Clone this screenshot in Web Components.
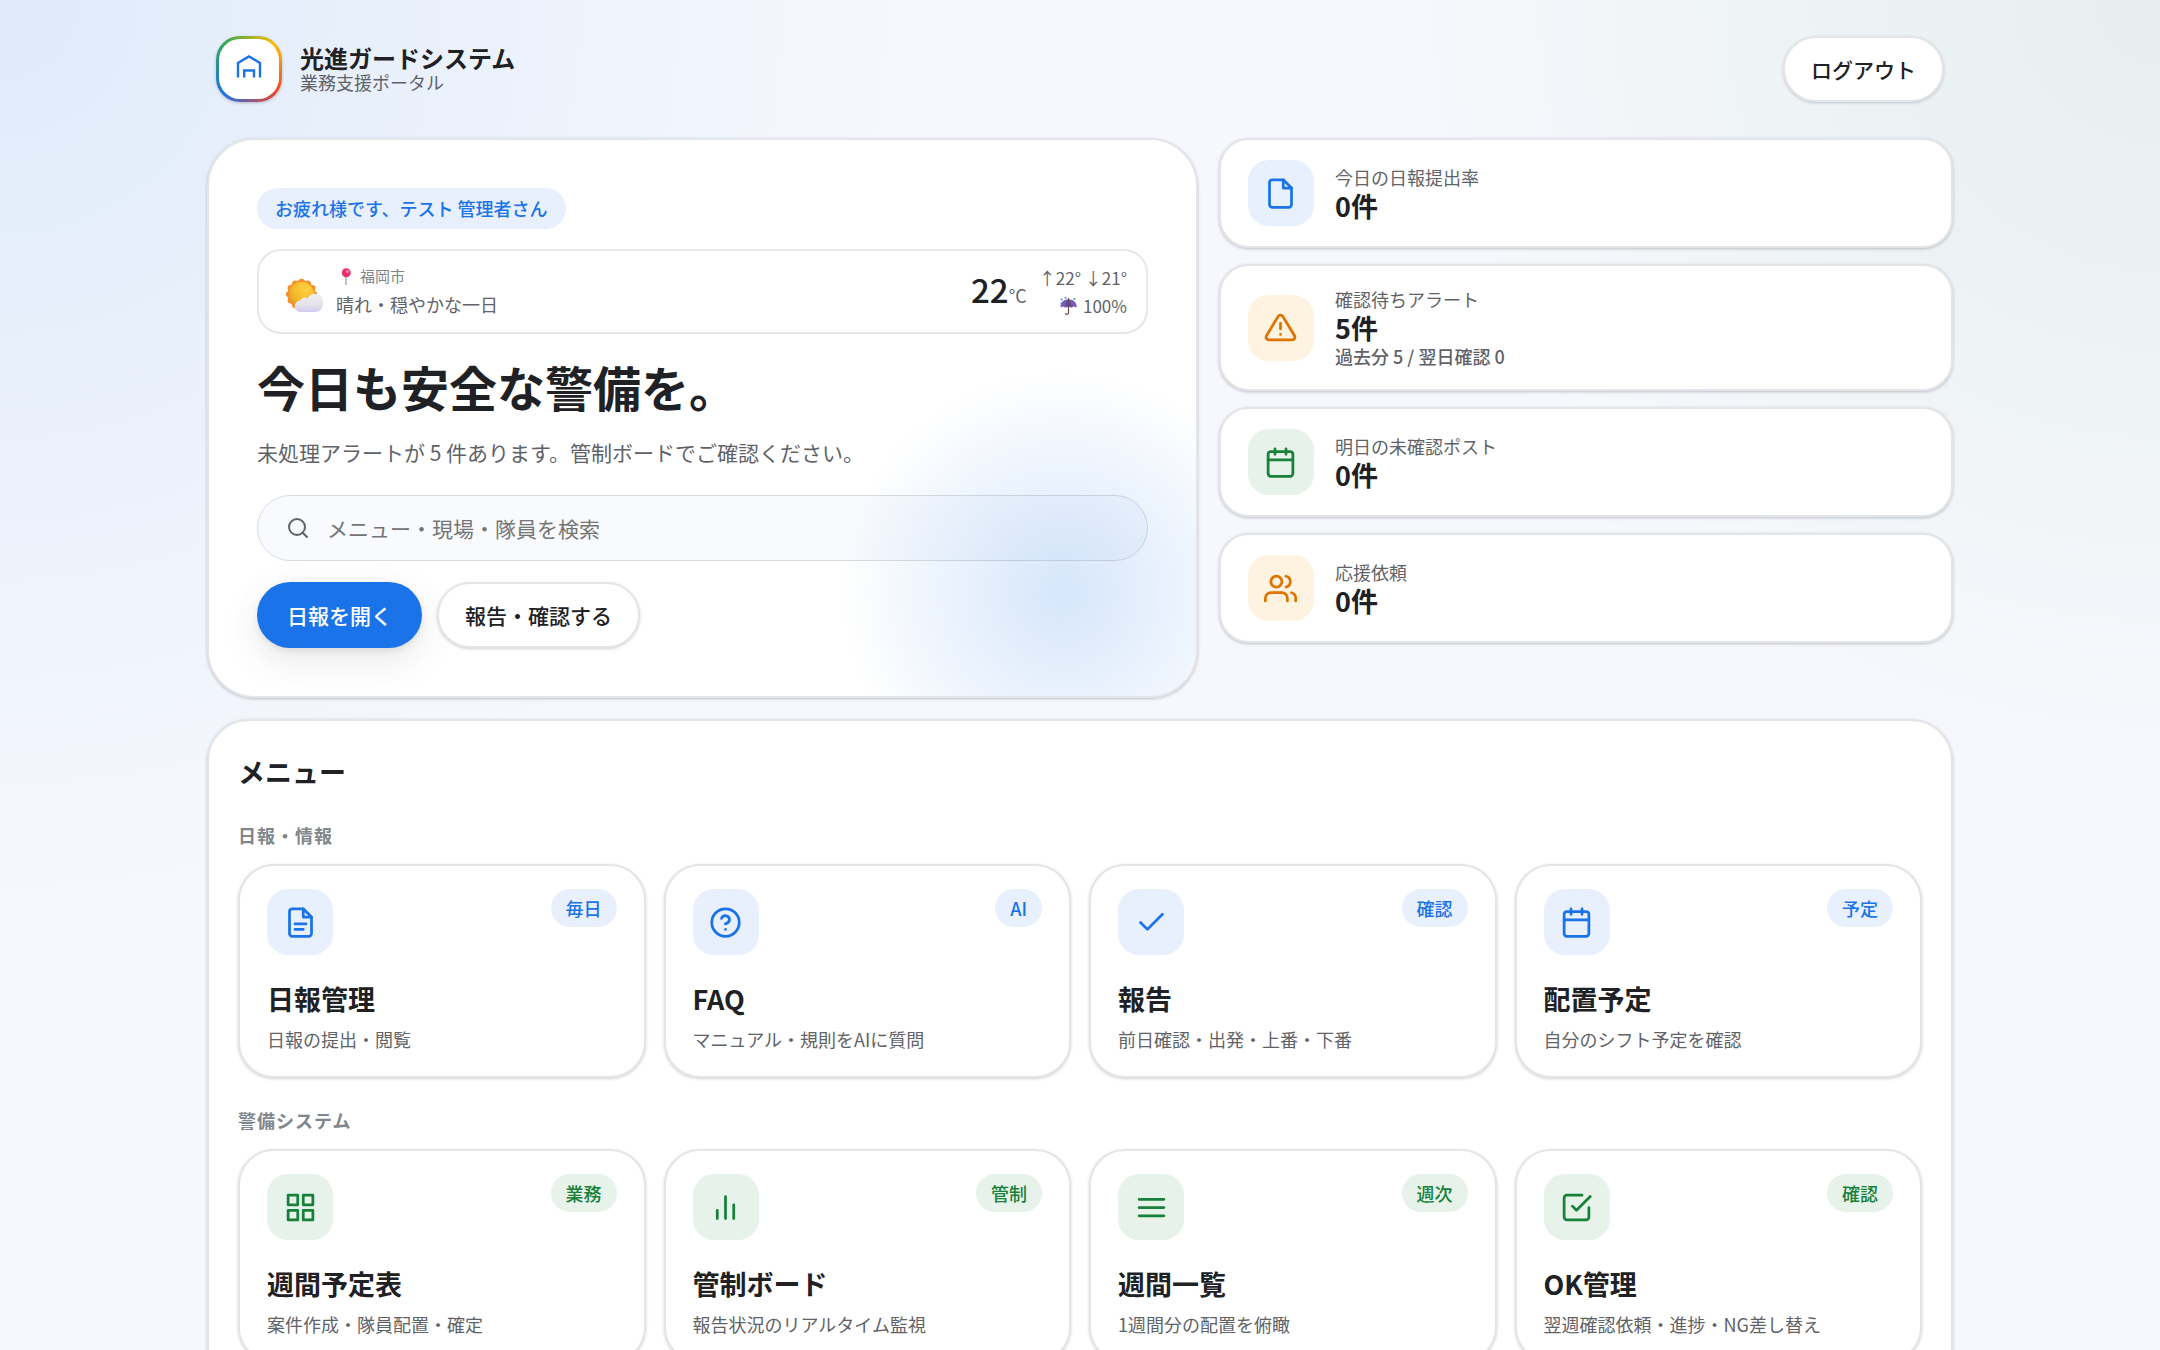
<!DOCTYPE html>
<html lang="ja">
<head>
<meta charset="UTF-8">
<title>光進ガードシステム</title>
<style>
  body {
    margin: 0;
    min-height: 100vh;
    font-family: "Noto Sans CJK JP", sans-serif;
    font-size: 18px;
    color: #202124;
    background:
      radial-gradient(circle at 0% 0%, rgba(26, 125, 226, 0.11), transparent 930px),
      radial-gradient(circle at 100% 0%, rgba(24, 128, 56, 0.08), transparent 780px),
      #f7f8fd;
  }
</style>
</head>
<body>
<portal-app></portal-app>

<script>
const ICONS = {
  file: '<path d="M14 2H6a2 2 0 0 0-2 2v16a2 2 0 0 0 2 2h12a2 2 0 0 0 2-2V8z"/><path d="M14 2v6h6"/>',
  fileText: '<path d="M14 2H6a2 2 0 0 0-2 2v16a2 2 0 0 0 2 2h12a2 2 0 0 0 2-2V8z"/><path d="M14 2v6h6M8 13h8M8 17h6"/>',
  alert: '<path d="M10.3 3.9 1.8 18a2 2 0 0 0 1.7 3h17a2 2 0 0 0 1.7-3L13.7 3.9a2 2 0 0 0-3.4 0z"/><path d="M12 9v4M12 17h.01"/>',
  calendar: '<rect x="3" y="4" width="18" height="18" rx="2"/><path d="M16 2v4M8 2v4M3 10h18"/>',
  users: '<path d="M17 21v-2a4 4 0 0 0-4-4H5a4 4 0 0 0-4 4v2"/><circle cx="9" cy="7" r="4"/><path d="M23 21v-2a4 4 0 0 0-3-3.9M16 3.1a4 4 0 0 1 0 7.8"/>',
  help: '<circle cx="12" cy="12" r="10"/><path d="M9.1 9a3 3 0 0 1 5.8 1c0 2-3 3-3 3M12 17h.01"/>',
  check: '<path d="M20 6 9 17l-5-5"/>',
  grid: '<rect x="3" y="3" width="7" height="7"/><rect x="14" y="3" width="7" height="7"/><rect x="14" y="14" width="7" height="7"/><rect x="3" y="14" width="7" height="7"/>',
  bars: '<path d="M18 20V10M12 20V4M6 20v-6"/>',
  list: '<path d="M3 6h18M3 12h18M3 18h18"/>',
  checkSquare: '<path d="m9 11 3 3L22 4"/><path d="M21 12v7a2 2 0 0 1-2 2H5a2 2 0 0 1-2-2V5a2 2 0 0 1 2-2h11"/>',
  search: '<circle cx="11" cy="11" r="8"/><path d="m21 21-4.3-4.3"/>'
};

class UiIcon extends HTMLElement {
  constructor() {
    super();
    this.attachShadow({ mode: 'open' });
  }

  connectedCallback() {
    this.shadowRoot.innerHTML = `
      <style>
        :host { display: block; flex: none; width: 33px; height: 33px; }
        svg {
          display: block;
          width: 100%;
          height: 100%;
          fill: none;
          stroke: currentColor;
          stroke-width: 2;
          stroke-linecap: round;
          stroke-linejoin: round;
        }
      </style>
      <svg viewBox="0 0 24 24" aria-hidden="true">${ICONS[this.getAttribute('name')]}</svg>
    `;
  }
}

// Скруглённая плитка с иконкой, цвет задаёт атрибут tone
class IconTile extends HTMLElement {
  constructor() {
    super();
    this.attachShadow({ mode: 'open' });
  }

  connectedCallback() {
    this.shadowRoot.innerHTML = `
      <style>
        :host {
          display: flex;
          flex: none;
          align-items: center;
          justify-content: center;
          width: 66px;
          height: 66px;
          border-radius: 21px;
          background: #e8f0fe;
          color: #1a73e8;
        }
        :host([tone="green"]) { background: #e6f2ea; color: #188038; }
        :host([tone="orange"]) { background: #fef2e0; color: #de7300; }
      </style>
      <ui-icon name="${this.getAttribute('icon')}"></ui-icon>
    `;
  }
}

class UiButton extends HTMLElement {
  constructor() {
    super();
    this.attachShadow({ mode: 'open' });
    this.shadowRoot.innerHTML = `
      <style>
        :host { display: block; }
        button {
          display: block;
          height: 66px;
          padding: 0 26px;
          border: 2px solid #e4e5e8;
          border-radius: 33px;
          background: #fff;
          color: #202124;
          font: 500 21px/30px "Noto Sans CJK JP", sans-serif;
          box-shadow: 0 1px 3px rgba(60, 64, 67, 0.24);
          cursor: pointer;
        }
        :host([primary]) button {
          padding: 0 30px;
          border: 0;
          background: #1a73e8;
          color: #fff;
          box-shadow: 0 12px 36px rgba(60, 64, 67, 0.12), 0 3px 6px rgba(60, 64, 67, 0.1);
        }
      </style>
      <button type="button"><slot></slot></button>
    `;
  }
}

class PortalHeader extends HTMLElement {
  constructor() {
    super();
    this.attachShadow({ mode: 'open' });
    this.shadowRoot.innerHTML = `
      <style>
        :host {
          display: flex;
          align-items: center;
          justify-content: space-between;
          padding: 0 9px;
        }
        .brand { display: flex; align-items: center; gap: 18px; }
        .logo {
          display: flex;
          align-items: center;
          justify-content: center;
          box-sizing: border-box;
          width: 66px;
          height: 66px;
          border: 3px solid transparent;
          border-radius: 24px;
          background:
            linear-gradient(#fff, #fff) padding-box,
            conic-gradient(from 45deg, #fbbc04, #ea4335, #1a73e8, #34a853, #fbbc04) border-box;
          box-shadow: 0 1px 3px rgba(60, 64, 67, 0.3);
        }
        .logo svg { width: 30px; height: 30px; fill: none; stroke: #1a73e8; stroke-width: 2.4; }
        strong { display: block; font-size: 24px; line-height: 26px; }
        small { display: block; font-size: 18px; line-height: 22px; color: #5f6368; }
      </style>
      <div class="brand">
        <div class="logo">
          <svg viewBox="0 0 30 30" aria-hidden="true">
            <path d="M4 23.5V9L15 2.5 26 9v14.5"/>
            <path d="M10.2 23.5v-7h9.8v7"/>
          </svg>
        </div>
        <div>
          <strong>光進ガードシステム</strong>
          <small>業務支援ポータル</small>
        </div>
      </div>
      <ui-button>ログアウト</ui-button>
    `;
  }
}

class WeatherCard extends HTMLElement {
  constructor() {
    super();
    this.attachShadow({ mode: 'open' });

    // зубчики по краю солнца
    let rays = '';
    for (let i = 0; i < 12; i++) {
      const a = i * Math.PI / 6;
      rays += `<circle cx="${(15.5 + 12.6 * Math.sin(a)).toFixed(1)}" cy="${(25.3 - 12.6 * Math.cos(a)).toFixed(1)}" r="3"/>`;
    }

    this.shadowRoot.innerHTML = `
      <style>
        :host {
          display: flex;
          align-items: center;
          gap: 12px;
          padding: 12px 19px 12px 27px;
          border: 2px solid #e6e7e9;
          border-radius: 24px;
          background: #fff;
          color: #5f6368;
        }
        svg { display: block; flex: none; }
        .info { flex: 1; }
        .city, .rain { display: flex; align-items: center; gap: 4px; }
        .city { font-size: 15px; line-height: 25px; color: #80868b; }
        .text { font-size: 18px; line-height: 32px; }
        .temp { font-size: 18px; line-height: 48px; }
        .temp b { font-size: 33px; font-weight: 500; color: #202124; }
        .range { font-size: 17px; line-height: 28px; text-align: right; }
        .rain { justify-content: flex-end; }
      </style>
      <svg width="38" height="45" viewBox="0 0 38 45" role="img" aria-label="晴れ">
        <defs>
          <radialGradient id="sun" cx="0.65" cy="0.3" r="0.8">
            <stop offset="0" stop-color="#ffd23f"/>
            <stop offset="0.6" stop-color="#f6b92c"/>
            <stop offset="1" stop-color="#d9982b"/>
          </radialGradient>
          <linearGradient id="cloud" x1="0" y1="0" x2="0" y2="1">
            <stop offset="0" stop-color="#eeeef2"/>
            <stop offset="0.6" stop-color="#e4e3ea"/>
            <stop offset="1" stop-color="#d3caf0"/>
          </linearGradient>
        </defs>
        <g fill="#fb8c2b">${rays}<circle cx="15.5" cy="25.3" r="14"/></g>
        <circle cx="15.5" cy="25.3" r="12.6" fill="url(#sun)"/>
        <path d="M14.5 43a5.7 5.7 0 0 1-.3-11.4 5 5 0 0 1 7.6-2.2 8 8 0 0 1 15.2 3.4c.6 5.5-2.8 10.2-7.5 10.2z" fill="url(#cloud)"/>
      </svg>
      <div class="info">
        <div class="city">
          <svg width="20" height="20" viewBox="0 0 20 20" role="img" aria-label="場所">
            <path d="M10 9v10" stroke="#b6b1bd" stroke-width="1.6"/>
            <circle cx="10.3" cy="6.8" r="4.5" fill="#e8306f"/>
            <circle cx="11.5" cy="5.3" r="1.6" fill="#ff7fa6"/>
          </svg>
          福岡市
        </div>
        <div class="text">晴れ・穏やかな一日</div>
      </div>
      <div class="temp"><b>22</b>°C</div>
      <div class="range">
        <div>↑22° ↓21°</div>
        <div class="rain">
          <svg width="20" height="20" viewBox="0 0 20 20" role="img" aria-label="降水確率">
            <path d="M1.5 11.5C1.5 6 5 3.2 9.5 3.2S17.8 6 17.8 11.5l-2.8-1-2.7 1.2-2.8-1.2-2.7 1.2-2.7-1.2z" fill="#7a5cb8"/>
            <path d="M6.5 10.8C6.5 7 8 4.5 9.5 3.3c1.5 1.2 3 3.7 3 7.5l-3-.8z" fill="#5f4a9e"/>
            <path d="M9.5 2v15.2a1.6 1.6 0 0 1-3.1 0" fill="none" stroke="#6b4a55" stroke-width="1.2"/>
            <g fill="#4a8df8">
              <circle cx="2.6" cy="3.5" r="1.1"/>
              <circle cx="6.5" cy="1.8" r="1"/>
              <circle cx="15.5" cy="3" r="1.1"/>
              <circle cx="2.2" cy="7.5" r=".9"/>
            </g>
          </svg>
          100%
        </div>
      </div>
    `;
  }
}

class SearchField extends HTMLElement {
  constructor() {
    super();
    this.attachShadow({ mode: 'open' });
    this.shadowRoot.innerHTML = `
      <style>
        :host { display: block; }
        label {
          display: flex;
          align-items: center;
          gap: 17px;
          box-sizing: border-box;
          height: 66px;
          padding: 0 28px;
          border: 1px solid #dadce0;
          border-radius: 33px;
          background: #f8fafd;
          color: #5f6368;
        }
        ui-icon { width: 24px; height: 24px; }
        input {
          flex: 1;
          min-width: 0;
          padding: 0;
          border: 0;
          outline: 0;
          background: none;
          color: #202124;
          font: 21px/30px "Noto Sans CJK JP", sans-serif;
        }
        input::placeholder { color: #757575; }
      </style>
      <label>
        <ui-icon name="search"></ui-icon>
        <input type="search" placeholder="メニュー・現場・隊員を検索" aria-label="検索">
      </label>
    `;
  }
}

class HeroPanel extends HTMLElement {
  constructor() {
    super();
    this.attachShadow({ mode: 'open' });
    this.shadowRoot.innerHTML = `
      <style>
        :host {
          display: block;
          position: relative;
          overflow: hidden;
          padding: 48px;
          border: 2px solid #e4e5e8;
          border-radius: 48px;
          background: #fff;
          box-shadow: 0 1px 3px rgba(60, 64, 67, 0.3);
        }
        /* голубое свечение поверх карточки */
        :host::after {
          content: "";
          position: absolute;
          right: -92px;
          bottom: -122px;
          width: 450px;
          height: 450px;
          border-radius: 50%;
          background: radial-gradient(circle, rgba(26, 115, 232, 0.18), transparent 70%);
          pointer-events: none;
        }
        .hello {
          display: inline-block;
          padding: 7px 18px;
          border-radius: 21px;
          background: #e8f0fe;
          color: #1a73e8;
          font-weight: 500;
          line-height: 27px;
        }
        weather-card { margin-top: 20px; }
        h1 { margin: 22px 0 0; font-size: 48px; line-height: 60px; font-weight: 700; }
        p { margin: 19px 0 0; font-size: 21px; line-height: 34px; color: #5f6368; }
        search-field { margin-top: 26px; }
        .actions { display: flex; gap: 15px; margin-top: 21px; }
      </style>
      <div class="hello">お疲れ様です、テスト 管理者さん</div>
      <weather-card></weather-card>
      <h1>今日も安全な警備を。</h1>
      <p>未処理アラートが 5 件あります。管制ボードでご確認ください。</p>
      <search-field></search-field>
      <div class="actions">
        <ui-button primary>日報を開く</ui-button>
        <ui-button>報告・確認する</ui-button>
      </div>
    `;
  }
}

class StatCard extends HTMLElement {
  constructor() {
    super();
    this.attachShadow({ mode: 'open' });
  }

  connectedCallback() {
    this.shadowRoot.innerHTML = `
      <style>
        :host {
          display: flex;
          align-items: center;
          gap: 21px;
          padding: 20px 27px;
          border: 2px solid #e4e5e8;
          border-radius: 30px;
          background: #fff;
          box-shadow: 0 1px 3px rgba(60, 64, 67, 0.3);
        }
        .label { line-height: 26px; color: #5f6368; }
        .value { font-size: 27px; line-height: 32px; font-weight: 700; }
        ::slotted(small) {
          display: block;
          font-size: 18px;
          font-weight: 500;
          line-height: 25px;
          color: #5f6368;
        }
      </style>
      <icon-tile icon="${this.getAttribute('icon')}" tone="${this.getAttribute('tone')}"></icon-tile>
      <div>
        <div class="label">${this.getAttribute('label')}</div>
        <div class="value">${this.getAttribute('value')}</div>
        <slot></slot>
      </div>
    `;
  }
}

class MenuCard extends HTMLElement {
  constructor() {
    super();
    this.attachShadow({ mode: 'open' });
  }

  connectedCallback() {
    const tone = this.getAttribute('tone');
    this.shadowRoot.innerHTML = `
      <style>
        :host { display: block; min-width: 0; }
        a {
          display: block;
          padding: 23px 27px;
          border: 2px solid #e4e5e8;
          border-radius: 36px;
          background: #fff;
          box-shadow: 0 1px 3px rgba(60, 64, 67, 0.24);
          color: inherit;
          text-decoration: none;
        }
        .top { display: flex; align-items: flex-start; justify-content: space-between; }
        .tag {
          padding: 5px 15px;
          border-radius: 19px;
          background: #e8f0fe;
          color: #1a73e8;
          font-weight: 500;
          line-height: 28px;
        }
        :host([tone="green"]) .tag { background: #e6f2ea; color: #188038; }
        h3 { margin: 24px 0 0; font-size: 27px; line-height: 40px; font-weight: 700; }
        p { margin: 6px 0 0; line-height: 28px; color: #5f6368; }
      </style>
      <a href="#">
        <div class="top">
          <icon-tile icon="${this.getAttribute('icon')}" tone="${tone}"></icon-tile>
          <span class="tag">${this.getAttribute('tag')}</span>
        </div>
        <h3>${this.getAttribute('title-text')}</h3>
        <p><slot></slot></p>
      </a>
    `;
  }
}

class MenuGroup extends HTMLElement {
  constructor() {
    super();
    this.attachShadow({ mode: 'open' });
  }

  connectedCallback() {
    this.shadowRoot.innerHTML = `
      <style>
        :host { display: block; }
        h2 {
          margin: 0 0 15px;
          font-size: 18px;
          line-height: 27px;
          font-weight: 700;
          letter-spacing: 1px;
          color: #80868b;
        }
        .grid { display: grid; grid-template-columns: repeat(4, 1fr); gap: 18px; }
      </style>
      <h2>${this.getAttribute('label')}</h2>
      <div class="grid"><slot></slot></div>
    `;
  }
}

class PortalApp extends HTMLElement {
  constructor() {
    super();
    this.attachShadow({ mode: 'open' });
    this.shadowRoot.innerHTML = `
      <style>
        :host {
          display: block;
          max-width: 1746px;
          margin: 0 auto;
          padding: 36px 27px;
        }
        .overview {
          display: grid;
          grid-template-columns: 1.35fr 1fr;
          gap: 21px;
          margin-top: 36px;
        }
        .stats { display: flex; flex-direction: column; gap: 16px; }
        .menu {
          margin-top: 21px;
          padding: 30px 29px;
          border: 2px solid #e4e5e8;
          border-radius: 42px;
          background: #fff;
          box-shadow: 0 1px 3px rgba(60, 64, 67, 0.3);
        }
        .menu > h2 { margin: 0; font-size: 27px; line-height: 42px; font-weight: 700; }
        menu-group { margin-top: 29px; }
      </style>
      <portal-header></portal-header>
      <div class="overview">
        <hero-panel></hero-panel>
        <div class="stats">
          <stat-card icon="file" tone="blue" label="今日の日報提出率" value="0件"></stat-card>
          <stat-card icon="alert" tone="orange" label="確認待ちアラート" value="5件"><small>過去分 5 / 翌日確認 0</small></stat-card>
          <stat-card icon="calendar" tone="green" label="明日の未確認ポスト" value="0件"></stat-card>
          <stat-card icon="users" tone="orange" label="応援依頼" value="0件"></stat-card>
        </div>
      </div>
      <section class="menu">
        <h2>メニュー</h2>
        <menu-group label="日報・情報">
          <menu-card icon="fileText" tone="blue" tag="毎日" title-text="日報管理">日報の提出・閲覧</menu-card>
          <menu-card icon="help" tone="blue" tag="AI" title-text="FAQ">マニュアル・規則をAIに質問</menu-card>
          <menu-card icon="check" tone="blue" tag="確認" title-text="報告">前日確認・出発・上番・下番</menu-card>
          <menu-card icon="calendar" tone="blue" tag="予定" title-text="配置予定">自分のシフト予定を確認</menu-card>
        </menu-group>
        <menu-group label="警備システム">
          <menu-card icon="grid" tone="green" tag="業務" title-text="週間予定表">案件作成・隊員配置・確定</menu-card>
          <menu-card icon="bars" tone="green" tag="管制" title-text="管制ボード">報告状況のリアルタイム監視</menu-card>
          <menu-card icon="list" tone="green" tag="週次" title-text="週間一覧">1週間分の配置を俯瞰</menu-card>
          <menu-card icon="checkSquare" tone="green" tag="確認" title-text="OK管理">翌週確認依頼・進捗・NG差し替え</menu-card>
        </menu-group>
      </section>
    `;
  }
}

customElements.define('ui-icon', UiIcon);
customElements.define('icon-tile', IconTile);
customElements.define('ui-button', UiButton);
customElements.define('portal-header', PortalHeader);
customElements.define('weather-card', WeatherCard);
customElements.define('search-field', SearchField);
customElements.define('hero-panel', HeroPanel);
customElements.define('stat-card', StatCard);
customElements.define('menu-card', MenuCard);
customElements.define('menu-group', MenuGroup);
customElements.define('portal-app', PortalApp);
</script>
</body>
</html>
